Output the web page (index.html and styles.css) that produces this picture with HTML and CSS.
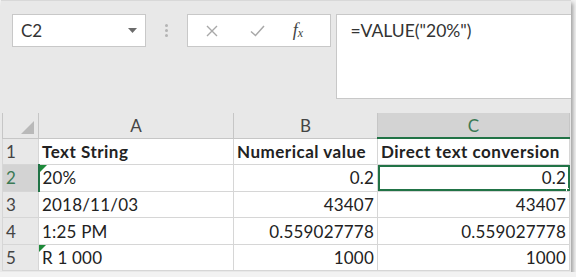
FILE: index.html
```html
<!DOCTYPE html>
<html lang="en">
<head>
  <meta charset="UTF-8">
  <title>VALUE function</title>
  <link rel="stylesheet" href="styles.css">
</head>
<body>
  <div class="window">
    <div class="formula-bar">
      <div class="name-box">
        <span>C2</span>
        <svg class="caret" width="9" height="5" viewBox="0 0 9 5"><path d="M0 0h9L4.5 5z" fill="#6b6b6b"/></svg>
      </div>
      <div class="grip"><i></i><i></i><i></i></div>
      <div class="buttons">
        <svg width="12" height="12" viewBox="0 0 12 12"><path d="M1 1l10 10M11 1L1 11" stroke="#a8a8a8" stroke-width="1.4"/></svg>
        <svg width="15" height="12" viewBox="0 0 15 12"><path d="M1 6.5l4.5 4L14 1" stroke="#a8a8a8" stroke-width="1.5" fill="none"/></svg>
        <span class="fx">f<sub>x</sub></span>
      </div>
      <div class="formula">=VALUE("20%")</div>
    </div>

    <table class="sheet">
      <colgroup>
        <col class="c-rh"><col class="c-a"><col class="c-b"><col class="c-c">
      </colgroup>
      <tr class="col-head">
        <th class="corner"><span class="tri"></span></th>
        <th>A</th><th>B</th><th class="sel">C</th>
      </tr>
      <tr>
        <th class="rh">1</th>
        <td class="bold">Text String</td><td class="bold">Numerical value</td><td class="bold">Direct text conversion</td>
      </tr>
      <tr>
        <th class="rh sel">2</th>
        <td class="flag">20%</td><td class="num">0.2</td><td class="num active">0.2<span class="handle"></span></td>
      </tr>
      <tr>
        <th class="rh">3</th>
        <td>2018/11/03</td><td class="num">43407</td><td class="num">43407</td>
      </tr>
      <tr>
        <th class="rh">4</th>
        <td>1:25 PM</td><td class="num">0.559027778</td><td class="num">0.559027778</td>
      </tr>
      <tr>
        <th class="rh">5</th>
        <td class="flag">R 1 000</td><td class="num">1000</td><td class="num">1000</td>
      </tr>
    </table>
  </div>
</body>
</html>
```

FILE: styles.css
```css
* {
  box-sizing: border-box;
}
body {
  margin: 0;
  background: #f2f2f2;
  font-family: Lato, "Open Sans", sans-serif;
  color: #222;
}
.window {
  width: 570px;
  height: 272px;
  margin-left: 1px;
  background: #e8e8e8;
  box-shadow: 2px 3px 4px rgba(0,0,0,0.35);
  overflow: hidden;
}
/* Formula bar */
.formula-bar {
  display: flex;
  align-items: flex-start;
  padding: 13px 0 0 11px;
  height: 113px;
  border-top: 1px solid #d8d8d8;
}
.name-box {
  width: 134px;
  height: 33px;
  background: #fff;
  border: 1px solid #c8c8c8;
  display: flex;
  align-items: center;
  justify-content: space-between;
  padding: 0 8px 0 8px;
  font-size: 17px;
  color: #333;
}
.grip {
  width: 41px;
  height: 33px;
  display: flex;
  flex-direction: column;
  align-items: center;
  justify-content: center;
  gap: 2px;
}
.grip i {
  width: 3px;
  height: 3px;
  border-radius: 50%;
  background: #b4b4b4;
}
.buttons {
  width: 145px;
  height: 33px;
  background: #fff;
  border: 1px solid #c8c8c8;
  display: flex;
  align-items: center;
  padding: 0 0 0 18px;
  gap: 32px;
}
.fx {
  font-family: "Liberation Serif", serif;
  font-style: italic;
  font-size: 18px;
  color: #444;
  margin-left: -4px;
}
.fx sub {
  font-size: 12px;
  vertical-align: -1px;
}
.formula {
  width: 235px;
  height: 85px;
  margin-left: 5px;
  background: #fff;
  border: 1px solid #c8c8c8;
  border-right: none;
  padding: 5px 0 0 13px;
  font-size: 17.5px;
  color: #333;
}
/* Sheet */
.sheet {
  border-collapse: collapse;
  table-layout: fixed;
  width: 567px;
  margin-left: 1px;
  font-size: 17px;
  letter-spacing: 0.2px;
}
.c-rh { width: 36px; }
.c-a { width: 195px; }
.c-b { width: 144px; }
.c-c { width: 192px; }
.sheet th,
.sheet td {
  height: 26.6px;
  padding: 0 3px;
  border: 1px solid #d6d6d6;
  white-space: nowrap;
  overflow: hidden;
}
.sheet td {
  background: #fff;
}
.col-head th {
  height: 25px;
  background: #e8e8e8;
  border-color: #c6c6c6;
  font-weight: normal;
  color: #444;
  border-top: none;
}
.col-head th.sel {
  background: #d3d3d3;
  color: #3b7a55;
  border-bottom: 2px solid #217346;
}
.corner {
  position: relative;
}
.tri {
  position: absolute;
  right: 4px;
  bottom: 4px;
  width: 0;
  height: 0;
  border-left: 13px solid transparent;
  border-bottom: 13px solid #b9b9b9;
}
.rh {
  background: #e8e8e8;
  border-color: #c6c6c6;
  font-weight: normal;
  color: #444;
  text-align: left;
  padding-left: 11px;
}
.rh.sel {
  background: #d3d3d3;
  color: #3b7a55;
  border-right: 2px solid #217346;
}
.bold {
  font-weight: bold;
  letter-spacing: 0.5px;
}
.num {
  text-align: right;
}
.flag {
  position: relative;
}
.flag::before {
  content: "";
  position: absolute;
  left: 0;
  top: 0;
  border-top: 7px solid #1e8a3a;
  border-right: 7px solid transparent;
}
.active {
  position: relative;
  outline: 2px solid #217346;
  outline-offset: -2px;
}
.handle {
  position: absolute;
  right: -3px;
  bottom: -3px;
  width: 6px;
  height: 6px;
  background: #217346;
  border: 1px solid #fff;
}
```
